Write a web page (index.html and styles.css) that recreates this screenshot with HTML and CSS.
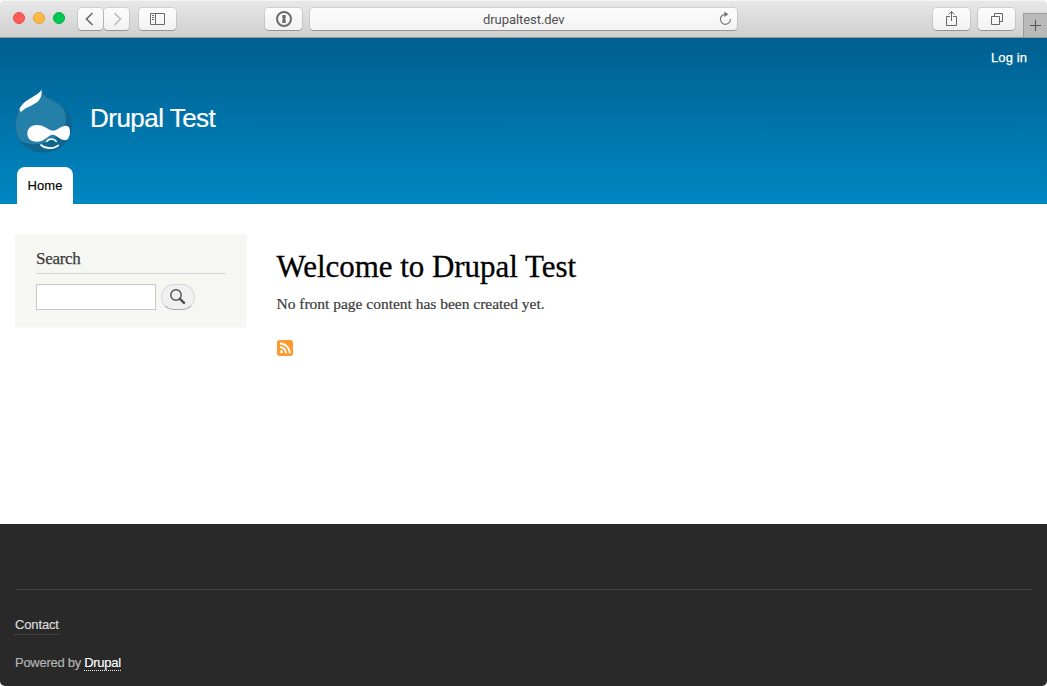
FILE: index.html
```html
<!DOCTYPE html>
<html lang="en">
<head>
<meta charset="utf-8">
<title>Welcome to Drupal Test</title>
<link rel="stylesheet" href="styles.css">
</head>
<body>
<div class="window">
  <div class="toolbar">
    <div class="lights"><i class="light red"></i><i class="light amber"></i><i class="light green"></i></div>
    <div class="nav-buttons">
      <span class="btn narrow"><svg width="26" height="22" viewBox="0 0 26 22"><path d="M14.500 5 8.500 11l6 6" fill="none" stroke="#6c6c6c" stroke-width="1.700"/></svg></span>
      <span class="btn narrow"><svg width="26" height="22" viewBox="0 0 26 22"><path d="M10.500 5 16.500 11l-6 6" fill="none" stroke="#bdbdbd" stroke-width="1.700"/></svg></span>
    </div>
    <span class="btn sidebar-btn"><svg width="38" height="22" viewBox="0 0 38 22"><g fill="none" stroke="#6a6a6a"><path d="M11.500 5.500h14v11h-14zM16.500 5.500v11"/><path d="M13 7.500h2M13 9.500h2M13 11.500h2"/></g></svg></span>
    <span class="btn pass-btn"><svg width="38" height="22" viewBox="0 0 38 22"><circle cx="19" cy="11" r="7" fill="none" stroke="#6c6c6c" stroke-width="2"/><path d="M17.300 7h3.400v3.300l-.8.8.8.8V15h-3.400v-3.300l.8-.8-.8-.8z" fill="#6c6c6c"/></svg></span>
    <div class="address"><span class="url">drupaltest.dev</span>
      <svg class="reload" width="14" height="16" viewBox="0 0 14 16"><path d="M7.500 4.300A5 5 0 1 0 12.400 9" fill="none" stroke="#777" stroke-width="1.200"/><path d="M6.300 1.600 10.500 4.300 6.300 7z" fill="#777"/></svg>
    </div>
    <span class="btn share-btn"><svg width="38" height="22" viewBox="0 0 38 22"><path d="M17 8.500h-3.500v9h10v-9H20M18.500 13V3.500M15.500 6.500l3-3 3 3" fill="none" stroke="#666"/></svg></span>
    <span class="btn tabs-btn"><svg width="38" height="22" viewBox="0 0 38 22"><path d="M13.500 8.500h8v8h-8zM16.500 8V5.500h8v8H22" fill="none" stroke="#666"/></svg></span>
    <span class="new-tab"><svg width="23" height="24" viewBox="0 0 23 24"><path d="M6 11.500h11M11.500 6v11" stroke="#555" fill="none" stroke-width="1.100"/></svg></span>
  </div>
  <header class="header">
    <a class="login"><span>Log in</span></a>
    <div class="brand">
      <svg class="logo" width="58" height="65" viewBox="45 24 174 195">
        <defs><clipPath id="drop"><path d="M125 26C127 44 140 52 160 61C192 77 216 101 216 137C216 184 178 217 131 217C83 217 45 184 45 137C45 99 60 75 88 55C106 44 120 41 125 26Z"/></clipPath></defs>
        <g clip-path="url(#drop)">
          <path d="M45 24h174v195H45z" fill="#2480a9"/>
          <path d="M165 60C202 85 205 125 187 150C157 191 100 207 50 177L60 222H222V60Z" fill="#10668f"/>
          <path d="M125 24C126 42 124 52 116 62C101 76 76 82 64 95C56 95 56 86 64 77C78 56 116 49 125 24Z" fill="#fff"/>
        </g>
        <path d="M125 28C127 45 140 53 160 62C191 78 215 101 215 137C215 183 178 216 131 216C83 216 46 183 46 137C46 115 51 99 59 88" fill="none" stroke="#0c628e" stroke-width="2"/>
        <path d="M111 135C133 135 146 151 158 152C170 152 184 137 198 137C208 138 210 146 210 157C209 171 204 181 195 181C182 180 168 164 158 164C146 164 134 185 111 185C94 185 82 176 82 161C82 145 94 135 111 135Z" fill="#fff"/>
        <path d="M139 186C146 174 163 174 170 186" fill="none" stroke="#fff" stroke-width="4"/>
        <path d="M123 195C137 207 161 208 175 196" fill="none" stroke="#fff" stroke-width="5" stroke-linecap="round"/>
      </svg>
      <span class="site-name"><span>Drupal Test</span></span>
    </div>
    <nav class="tab"><span>Home</span></nav>
  </header>
  <main class="main">
    <aside class="search-block">
      <h2 class="search-title"><span>Search</span></h2>
      <div class="search-form">
        <input class="search-input" type="text" aria-label="Search">
        <button class="search-button" aria-label="Submit search"><svg width="16" height="16" viewBox="0 0 16 16"><circle cx="6" cy="6" r="5.200" fill="none" stroke="#505050" stroke-width="1.400"/><path d="M9.900 9.900 14 13.800" stroke="#505050" stroke-width="2.500" stroke-linecap="round"/></svg></button>
      </div>
    </aside>
    <section class="content">
      <h1 class="title"><span>Welcome to Drupal Test</span></h1>
      <p class="empty"><span>No front page content has been created yet.</span></p>
      <svg class="feed" width="16" height="16" viewBox="0 0 16 16"><rect width="16" height="16" rx="2.500" fill="#ff9a2e"/><circle cx="4.500" cy="11.700" r="1.500" fill="#fff"/><path d="M3 7.200a6 6 0 0 1 6 6M3 3.500a9.700 9.700 0 0 1 9.700 9.700" fill="none" stroke="#fff" stroke-width="1.900"/></svg>
    </section>
  </main>
  <footer class="footer">
    <div class="footer-line"></div>
    <div><a class="contact">Contact</a></div>
    <div class="powered"><span>Powered by </span><a class="drupal">Drupal</a></div>
  </footer>
</div>
</body>
</html>
```
FILE: styles.css
```css
* { box-sizing: border-box; }
html { background: #fff; }
body { margin: 0; font-family: "Liberation Sans", Arial, sans-serif; font-size: 13px; }
svg { display: block; flex: none; }
.window { width: 1047px; height: 686px; display: flex; flex-direction: column; overflow: hidden; border-radius: 5px; background: #fff; }

.toolbar { height: 38px; flex: none; display: flex; align-items: flex-start; padding-top: 8px; background: linear-gradient(#e8e8e8, #cfcfcf); border-bottom: 1px solid #999; box-shadow: inset 0 1px #f5f5f5; }
.lights { display: flex; gap: 8px; margin: 4px 0 0 13px; width: 65px; }
.light { width: 12px; height: 12px; border-radius: 50%; }
.red { background: #ff5b58; border: 1px solid #e5504d; }
.amber { background: #ffb944; border: 1px solid #e3a13b; }
.green { background: #00c850; border: 1px solid #00b045; }
.nav-buttons { display: flex; gap: 1px; }
.btn { width: 37px; height: 22px; display: flex; flex: none; border-radius: 4px; background: linear-gradient(#fdfdfd, #f1f1f1); box-shadow: 0 0 0 1px rgba(0,0,0,.09), 0 1px 0 rgba(0,0,0,.22); }
.narrow { width: 25px; }
.sidebar-btn { margin-left: 10px; }
.pass-btn { margin-left: 89px; }
.address { width: 427px; height: 22px; flex: none; display: flex; align-items: center; margin-left: 8px; padding-right: 5px; border-radius: 4px; background: linear-gradient(#fdfdfd, #f3f3f3); box-shadow: 0 0 0 1px rgba(0,0,0,.09), 0 1px 0 rgba(0,0,0,.22); }
.url { flex: 1; padding: 2px 0 0 173px; font-family: Roboto, sans-serif; font-size: 13px; color: #505050; letter-spacing: -.06px; line-height: 22px; }
.reload { margin-bottom: 2px; }
.share-btn { margin-left: 196px; }
.tabs-btn { margin-left: 8px; }
.new-tab { width: 24px; height: 24px; margin: 5px 0 0 8px; background: #b9b9b9; border: solid #9b9b9b; border-width: 1px 0 0 1px; }

.header { height: 166px; flex: none; display: flex; flex-direction: column; background: linear-gradient(#005f90, #0087c1); color: #fff; }
.login { align-self: flex-end; height: 50px; padding: 12px 20px 0 0; line-height: 16px; letter-spacing: .1px; -webkit-text-stroke: .25px; }
.brand { height: 65px; display: flex; padding-left: 15px; }
.site-name { margin-left: 17px; padding-top: 15px; font-size: 26px; line-height: 30px; letter-spacing: -.52px; -webkit-text-stroke: .2px; }
.tab { width: 56px; height: 37px; margin: 14px 0 0 17px; border-radius: 8px 8px 0 0; background: #fff; color: #000; text-align: center; line-height: 37px; letter-spacing: .1px; -webkit-text-stroke: .15px; }

.main { height: 320px; flex: none; display: flex; gap: 30px; padding: 30px 15px 0; font-family: "Liberation Serif", Georgia, serif; }
.search-block { width: 232px; height: 94px; padding: 15px 20px 0 21px; background: #f6f6f2; border: 1px solid #f9f9f9; border-left: 0; flex: none; }
.search-title { height: 24px; margin: 0 0 10px; border-bottom: 1px solid #d3d3d6; color: #3b3b3b; font-size: 17px; font-weight: 400; line-height: 18px; letter-spacing: -.28px; -webkit-text-stroke: .25px; }
.search-form { display: flex; gap: 5px; }
.search-input { width: 120px; height: 26px; margin: 0; padding: 2px; border: 1px solid #c8c8cc; background: #fff; }
.search-button { width: 34px; height: 26px; margin: 0; padding: 0 1px 1px 0; display: flex; align-items: center; justify-content: center; border: 1px solid #d8d8d8; border-bottom-color: #aaa; border-radius: 13px; background: #f0f0f0; }
.content { padding-top: 15px; margin-left: -1px; }
.title { margin: 0; color: #000; font-size: 31px; font-weight: 400; line-height: 36px; letter-spacing: -.04px; white-space: nowrap; -webkit-text-stroke: .3px; }
.empty { margin: 10px 0 0; color: #3b3b3b; font-size: 15.5px; line-height: 18px; letter-spacing: -.01px; white-space: nowrap; -webkit-text-stroke: .2px; }
.title, .empty { padding-left: .5px; }
.feed { margin: 27px 0 0 1px; }

.footer { height: 162px; flex: none; padding: 65px 15px 0; background: #292929; color: #b5b5b5; -webkit-text-stroke: .15px; }
.footer-line { height: 1px; margin-bottom: 26px; background: #444; }
.footer > div { white-space: pre; }
.contact { display: inline-block; height: 19px; line-height: 18px; color: #dedede; border-bottom: 1px dotted #555; letter-spacing: -.14px; }
.powered { margin-top: 20px; line-height: 16px; letter-spacing: -.28px; }
.drupal { display: inline-block; height: 16px; color: #fff; border-bottom: 1px dotted #eee; }
```
